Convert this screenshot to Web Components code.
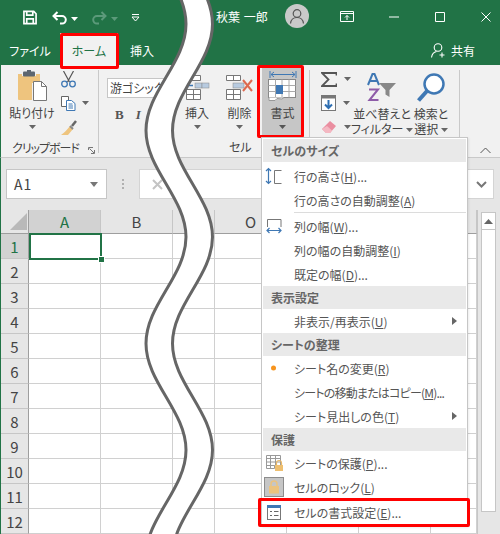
<!DOCTYPE html>
<html lang="ja"><head><meta charset="utf-8"><title>Excel</title>
<style>
html,body{margin:0;padding:0;background:#fff}
body{width:500px;height:534px;overflow:hidden;font-family:"Noto Sans CJK JP","Noto Sans",sans-serif;font-feature-settings:"palt";color:#444}
u{text-decoration:underline;text-underline-offset:1px}
</style></head><body>
<x-app>
  <x-titlebar></x-titlebar>
  <x-tabs></x-tabs>
  <x-ribbon></x-ribbon>
  <x-formula></x-formula>
  <x-sheet></x-sheet>
  <x-wave></x-wave>
  <x-mark style="--x:60px;--y:33px;--w:59px;--h:36px"></x-mark>
  <x-mark style="--x:257px;--y:65px;--w:47px;--h:73px"></x-mark>
  <x-menu>
    <x-mhead>セルのサイズ</x-mhead>
    <x-mitem style="margin-top:2px"><svg slot="icon" width="20" height="20" viewBox="0 0 20 20"><path d="M4.500 2.500v15M2 5l2.500-2.500L7 5M2 15l2.500 2.500L7 15" fill="none" stroke="#3f78b4" stroke-width="1.200"/><path d="M17.500 4.500H10.500V17.500h7" fill="none" stroke="#777" stroke-width="1"/></svg>行の高さ(<u>H</u>)...</x-mitem>
    <x-mitem>行の高さの自動調整(<u>A</u>)</x-mitem>
    <x-msep></x-msep>
    <x-mitem><svg slot="icon" width="20" height="20" viewBox="0 0 20 20"><path d="M3.500 11V3.500h13.500V11" fill="none" stroke="#777" stroke-width="1"/><path d="M3 14.500h14M5.500 12L3 14.500 5.500 17M14.500 12L17 14.500 14.500 17" fill="none" stroke="#3f78b4" stroke-width="1.200"/></svg>列の幅(<u>W</u>)...</x-mitem>
    <x-mitem>列の幅の自動調整(<u>I</u>)</x-mitem>
    <x-mitem>既定の幅(<u>D</u>)...</x-mitem>
    <x-mhead>表示設定</x-mhead>
    <x-mitem arrow>非表示/再表示(<u>U</u>)</x-mitem>
    <x-mhead>シートの整理</x-mhead>
    <x-mitem><svg slot="icon" width="20" height="20" viewBox="0 0 20 20"><circle cx="9.500" cy="10" r="2.500" fill="#f7941d"/></svg>シート名の変更(<u>R</u>)</x-mitem>
    <x-mitem style="letter-spacing:-.8px">シートの移動またはコピー(<u>M</u>)...</x-mitem>
    <x-mitem arrow>シート見出しの色(<u>T</u>)</x-mitem>
    <x-mhead>保護</x-mhead>
    <x-mitem><svg slot="icon" width="20" height="20" viewBox="0 0 20 20"><path d="M2.500 2.500h14v10h-6v3h-8zM2.500 5.500h14M2.500 9h14M2.500 12.500h8M6.500 2.500v13M11.500 2.500v10" fill="none" stroke="#999" stroke-width="1"/><path d="M12.500 12v-2a2.500 2.500 0 0 1 5 0v2" fill="none" stroke="#e8b868" stroke-width="1.200"/><rect x="11" y="12" width="8" height="6" fill="#eebf70"/></svg>シートの保護(<u>P</u>)...</x-mitem>
    <x-mitem><svg slot="icon" width="20" height="20" viewBox="0 0 20 20"><rect x=".5" y=".5" width="19" height="19" fill="#c6c6c6" stroke="#8c8c8c"/><path d="M7 9V7a3 3 0 0 1 6 0v2" fill="none" stroke="#ecc37e" stroke-width="1.500"/><rect x="5" y="9" width="10" height="7.500" fill="#ecc37e"/></svg>セルのロック(<u>L</u>)</x-mitem>
    <x-mitem style="height:26px"><svg slot="icon" width="20" height="20" viewBox="0 0 20 20"><rect x="3.500" y="3.500" width="13" height="14" fill="#fff" stroke="#777"/><rect x="3" y="3" width="14" height="3" fill="#3f78b4"/><path d="M6 9.500h2M10 9.500h4.500M6 13.500h2M10 13.500h4.500" stroke="#666" fill="none"/></svg>セルの書式設定(<u>E</u>)...</x-mitem>
  </x-menu>
  <x-mark style="--x:258px;--y:498px;--w:212px;--h:29px"></x-mark>
</x-app>
<script>
function def(name, css, html, init){
  customElements.define(name, class extends HTMLElement{
    connectedCallback(){
      if(this.shadowRoot) return;
      const r=this.attachShadow({mode:'open'});
      r.innerHTML='<style>'+css+'</style>'+(typeof html==='function'?html(this):html);
      if(init) init(r,this);
    }
  });
}
const caret=(c='#666')=>`<svg width="7" height="4" viewBox="0 0 7 4"><path d="M0 0h7L3.500 4z" fill="${c}"/></svg>`;

def('x-app',':host{display:block;position:relative;width:500px;height:534px;overflow:hidden;font-feature-settings:"palt"}','<slot></slot>');

def('x-titlebar',`:host{display:flex;align-items:center;height:33px;box-sizing:border-box;padding-top:2px;background:#217346;color:#fff;font-size:12px}
.b{display:flex;align-items:center;justify-content:center;flex:none}
svg{display:block}`,`
<div class="b" style="width:14px;margin-left:23px"><svg width="15" height="15" viewBox="0 0 15 15"><path d="M1 1h10.500L14 3.500V14H1zM4 1v4h6.500V1M4 14V9h7v5" fill="none" stroke="#fff" stroke-width="1.800"/></svg></div>
<div class="b" style="width:16px;margin-left:15px"><svg width="16" height="14" viewBox="0 0 16 14"><path d="M5.500 1L1.500 5l4 4M1.500 5H10a3.800 3.800 0 0 1 0 7.600H8" fill="none" stroke="#fff" stroke-width="2"/></svg></div>
<div class="b" style="width:7px;margin-left:3px;padding-top:2px">${caret('#fff')}</div>
<div class="b" style="width:16px;margin-left:13px"><svg width="16" height="14" viewBox="0 0 16 14"><path d="M10.500 1l4 4-4 4M14.500 5H6a3.800 3.800 0 0 0 0 7.600h2" fill="none" stroke="#5c9a7a" stroke-width="2"/></svg></div>
<div class="b" style="width:7px;margin-left:4px;padding-top:2px">${caret('#5c9a7a')}</div>
<div class="b" style="width:9px;margin-left:13px"><svg width="9" height="8" viewBox="0 0 9 8"><path d="M1 .5h7M1 3l3.500 4L8 3z" fill="none" stroke="#fff"/></svg></div>
<div style="margin-left:76px;width:58px;white-space:nowrap;margin-top:-2px;word-spacing:1px">秋葉 一郎</div>
<div class="b" style="width:24px;height:24px;border-radius:50%;background:#c9c9c9;margin:-3px 0 0 11px"><svg width="16" height="16" viewBox="0 0 16 16"><circle cx="8" cy="5.500" r="3.800" fill="none" stroke="#555" stroke-width="1.200"/><path d="M1.500 15.500c.5-4 3-6 6.500-6s6 2 6.500 6" fill="none" stroke="#555" stroke-width="1.200"/></svg></div>
<div class="b" style="width:14px;margin:-2px 0 0 31px"><svg width="14" height="11" viewBox="0 0 14 11"><path d="M.5 .5h13v10H.5zM.5 2.500h13M7 9V4.500M5 6.500l2-2 2 2" fill="none" stroke="#fff"/></svg></div>
<div class="b" style="width:10px;margin:-2px 0 0 35px"><svg width="10" height="2"><rect width="10" height="1" y=".5" fill="#fff"/></svg></div>
<div class="b" style="width:10px;margin:-2px 0 0 36px"><svg width="10" height="10" viewBox="0 0 10 10"><path d="M.5 .5h9v9h-9z" fill="none" stroke="#fff"/></svg></div>
<div class="b" style="width:10px;margin:-2px 0 0 36px"><svg width="10" height="10" viewBox="0 0 10 10"><path d="M.5 .5l9 9M9.500 .5l-9 9" fill="none" stroke="#fff"/></svg></div>`);

def('x-tabs',`:host{display:flex;align-items:center;height:32px;background:#217346;color:#fff;font-size:12px}
.t{display:flex;align-items:center;justify-content:center;height:100%;flex:none;padding-top:2px;box-sizing:border-box}
.h{background:#f1f1f1;color:#217346;height:100%}
.s{margin-left:auto;margin-right:25px;display:flex;align-items:center;gap:6px;padding-top:2px}
svg{display:block}`,`
<div class="t" style="width:60px">ファイル</div>
<div class="t h" style="width:58px">ホーム</div>
<div class="t" style="width:48px">挿入</div>
<div class="s"><svg width="14" height="15" viewBox="0 0 14 15"><circle cx="7" cy="4.500" r="3.800" fill="none" stroke="#fff" stroke-width="1.100"/><path d="M.5 14.500c.5-3.500 2.500-5.500 5-6M8.500 12h5M11 9.500v5" fill="none" stroke="#fff" stroke-width="1.100"/></svg><span>共有</span></div>`);

def('x-rbtn',`:host{display:flex;flex-direction:column;align-items:center;flex:none;height:71px;box-sizing:border-box;font-size:12px;line-height:15px;color:#444;white-space:nowrap;position:relative}
.i{height:35px;display:flex;align-items:flex-end;justify-content:center;margin-bottom:4px}
:host([sel]){background:#c6c6c6}
::slotted(svg){display:block}`,
`<div class="i"><slot name="icon"></slot></div><slot></slot>`);

def('x-ribbon',`:host{display:flex;height:93px;box-sizing:border-box;background:#f1f1f1;border-left:1px solid #217346;border-bottom:1px solid #c9c9c9;font-size:12px;color:#444;position:relative}
.g{display:flex;flex-direction:column;flex:none}
.body{flex:1;display:flex;padding-top:1px}
.lab{height:19px;line-height:17px;text-align:center;font-size:12px;color:#444;white-space:nowrap;position:relative}
.sep{width:1px;height:83px;margin-top:5px;background:#c9c9c9;flex:none}
.col{display:flex;flex-direction:column;flex:none}
.sm{height:24px;display:flex;align-items:center;gap:5px}
svg{display:block}
.cc{display:flex;justify-content:center;margin-top:5px}
.fn{width:59px;height:20px;box-sizing:border-box;margin:12px 0 0 8px;background:#fff;border:1px solid #c6c6c6;padding-left:2px;line-height:18px;font-size:12px;white-space:nowrap;overflow:hidden}
.bi{display:flex;gap:12px;margin:9px 0 0 16px;font:bold 13px "Liberation Serif",serif;color:#555}
.chev{position:absolute;right:9px;bottom:3px}
.launch{position:absolute;right:3px;bottom:3px}
.two{line-height:15px;text-align:center;white-space:nowrap;position:relative;top:-2px}
`,`
<div class="g" style="width:97px">
  <div class="body">
    <x-rbtn style="width:62px"><svg slot="icon" width="30" height="31" viewBox="0 0 30 31"><path d="M1 4h4v2h14V4h4v9h-8v17H2a1 1 0 0 1-1-1z" fill="#eec47e"/><rect x="6" y="1.500" width="12" height="5" rx="1" fill="#5d6670"/><rect x="10" y="0" width="4" height="3" fill="#5d6670"/><path d="M16.500 11.500h8l5 5v14h-13z" fill="#fff" stroke="#777"/><path d="M24.500 11.500v5h5" fill="none" stroke="#777"/></svg>貼り付け<div class="cc">${caret()}</div></x-rbtn>
    <div class="col" style="margin-left:-2px;padding-top:1px">
      <div class="sm"><svg width="15" height="17" viewBox="0 0 15 17"><path d="M2.500 0l6 11M12.500 0l-6 11" stroke="#555" stroke-width="1.200" fill="none"/><circle cx="3.500" cy="13" r="2.800" fill="none" stroke="#3f78b4" stroke-width="1.300"/><circle cx="11.500" cy="13" r="2.800" fill="none" stroke="#3f78b4" stroke-width="1.300"/></svg></div>
      <div class="sm"><svg width="15" height="15" viewBox="0 0 15 15"><path d="M.5 .5h7v10h-7z" fill="#fff" stroke="#666"/><path d="M5.500 4.500h5l3.500 3v7H5.500z" fill="#fff" stroke="#3f78b4"/><path d="M7.500 8h4M7.500 10h4.500M7.500 12h4.500" stroke="#3f78b4"/></svg><span style="margin-left:1px">${caret()}</span></div>
      <div class="sm"><svg width="16" height="15" viewBox="0 0 16 15"><path d="M9 6l3 3-5 6H0c3-2 6-5 9-9z" fill="#eec47e"/><path d="M9 6l3 3" stroke="#888" stroke-width="2"/><path d="M11 6l4-5" stroke="#666" stroke-width="2.500"/></svg></div>
    </div>
  </div>
  <div class="lab" style="text-align:left;padding-left:11px;letter-spacing:-1px">クリップボード<svg class="launch" width="7" height="7" viewBox="0 0 7 7"><path d="M.5 3V.5H5M1.500 1.500L6 6M3 6.500h3.500V3" fill="none" stroke="#777"/></svg></div>
</div>
<div class="sep"></div>
<div class="g" style="width:76px">
  <div class="body" style="flex-direction:column"><div class="fn">游ゴシック</div><div class="bi"><span>B</span><i>I</i></div></div>
  <div class="lab"></div>
</div>
<div class="g" style="width:133px">
  <div class="body" style="padding-left:1px">
    <x-rbtn style="width:42px"><svg slot="icon" width="28" height="26" viewBox="0 0 28 26"><path d="M3.500 .5h14v5h-14zM3.500 14.500h14v10h-14zM10.500 14.500v10M3.500 19.500h14" fill="#fff" stroke="#777"/><rect x="12" y="8" width="7" height="5" fill="#b8cbe0" stroke="#888" stroke-width=".5"/><rect x="19" y="8" width="7" height="5" fill="#b8cbe0" stroke="#888" stroke-width=".5"/><path d="M10 10.500H2M5 8l-3 2.500L5 13" fill="none" stroke="#3f78b4" stroke-width="1.300"/></svg>挿入<div class="cc">${caret()}</div></x-rbtn>
    <x-rbtn style="width:43px"><svg slot="icon" width="28" height="26" viewBox="0 0 28 26"><path d="M.5 .5h14v5H.5zM.5 14.500h14v10H.5zM7.500 14.500v10M.5 19.500h14M7.500 .5v5" fill="#fff" stroke="#777"/><rect x="7" y="8" width="11" height="5" fill="#b8cbe0" stroke="#888" stroke-width=".5"/><path d="M17 5l9 11M26 5l-9 11" stroke="#dd6a50" stroke-width="2"/></svg>削除<div class="cc">${caret()}</div></x-rbtn>
    <x-rbtn sel style="width:41px;margin-left:1px"><svg slot="icon" width="30" height="31" viewBox="0 0 30 31"><path d="M2 1v7M28 1v7M3 4.500h24M6 2L3 4.500 6 7M24 2l3 2.500L24 7" fill="none" stroke="#3f78b4" stroke-width="1"/><rect x=".5" y="9.500" width="27" height="18" fill="#fff" stroke="#888"/><path d="M7.500 9.500v18M14 9.500v18M21 9.500v18M.5 15.500h27M.5 21.500h27" stroke="#aaa" fill="none"/><rect x="8" y="15" width="7" height="9" fill="#3f78b4"/><path d="M1 27.500v3h6l2-2 5 .5 2-1.500" fill="#fff" stroke="#999"/></svg>書式<div class="cc">${caret('#555')}</div></x-rbtn>
  </div>
  <div class="lab" style="text-align:left;padding-left:54px">セル</div>
</div>
<div class="sep" style="margin-left:1px"></div>
<div class="g" style="width:149px">
  <div class="body">
    <div class="col" style="margin-left:11px;width:44px;padding-top:1px">
      <div class="sm" style="gap:7px"><svg width="16" height="15" viewBox="0 0 16 15"><path d="M15.500 3.500V1H1l6.500 6.500L1 14h14.500v-2.500" fill="none" stroke="#555" stroke-width="1.800"/></svg>${caret()}</div>
      <div class="sm" style="gap:7px"><svg width="15" height="16" viewBox="0 0 15 16"><rect x=".5" y=".5" width="14" height="15" fill="#fff" stroke="#777"/><rect x="0" y="0" width="15" height="3.500" fill="#777"/><path d="M7.500 5v8M4 9.500l3.500 3.500L11 9.500" fill="none" stroke="#2f6fb2" stroke-width="2"/></svg>${caret()}</div>
      <div class="sm" style="gap:7px"><svg width="16" height="14" viewBox="0 0 16 14"><path d="M9 1l6 5-6 7H5L1 9z" fill="#ea8ea0"/><path d="M1 9l4 4h4l2-2.500-5-4.500z" fill="#f4b8c2"/></svg>${caret()}</div>
    </div>
    <div class="col" style="width:70px;align-items:center;margin-left:-18px">
      <svg width="30" height="31" viewBox="0 0 30 31" style="margin:7px 0 4px"><path d="M1 12L5.500 1h2L12 12M3 8h7" fill="none" stroke="#3f78b4" stroke-width="2"/><path d="M2 16.500h9L2.500 27h9" fill="none" stroke="#8e5ca8" stroke-width="2"/><path d="M12 10h17l-6.500 7v7l-4-2.500V17z" fill="#888"/></svg>
      <div class="two">並べ替えと<br>フィルター <span style="display:inline-block;vertical-align:2px">${caret()}</span></div>
    </div>
    <div class="col" style="width:44px;align-items:center;margin-left:-8px">
      <svg width="30" height="31" viewBox="0 0 30 31" style="margin:7px 0 4px"><circle cx="18" cy="11" r="9.500" fill="#fff" stroke="#3f78b4" stroke-width="2.500"/><path d="M11 18L2.500 27.500" stroke="#3f78b4" stroke-width="4"/></svg>
      <div class="two">検索と<br>選択 <span style="display:inline-block;vertical-align:2px">${caret()}</span></div>
    </div>
  </div>
  <div class="lab"></div>
</div>
<div class="sep"></div>
<svg class="chev" width="11" height="7" viewBox="0 0 11 7"><path d="M.5 6l5-5 5 5" fill="none" stroke="#555"/></svg>`);

def('x-formula',`:host{display:flex;height:52px;box-sizing:border-box;background:#e6e6e6;border-left:1px solid #217346;padding-top:11px;align-items:flex-start;position:relative}
.nb{width:101px;height:30px;box-sizing:border-box;background:#fff;border:1px solid #c6c6c6;margin-left:5px;display:flex;align-items:center;justify-content:space-between;padding:0 8px 0 7px;font-size:14px;color:#444}
.dots{width:32px;display:flex;flex-direction:column;align-items:center;gap:2px;padding-top:10px;flex:none}
.dots i{width:2px;height:2px;background:#b0b0b0}
.fb{width:355px;height:30px;box-sizing:border-box;background:#fff;border:1px solid #d4d4d4;position:relative;display:flex;align-items:center;padding-left:12px;justify-content:space-between;padding-right:6px}
svg{display:block}`,`
<div class="nb"><span style="letter-spacing:1px">A1</span><svg width="8" height="5" viewBox="0 0 8 5"><path d="M0 0h8L4 5z" fill="#777"/></svg></div>
<div class="dots"><i></i><i></i><i></i></div>
<div class="fb"><svg width="11" height="11" viewBox="0 0 11 11"><path d="M1 1l9 9M10 1l-9 9" stroke="#c4c4c4" stroke-width="2"/></svg><svg width="11" height="7" viewBox="0 0 11 7"><path d="M1 1l4.500 4.500L10 1" fill="none" stroke="#777" stroke-width="2"/></svg></div>`);

const cols=[['A',72],['B',72],['N',42],['O',72],['P',72],['Q',72],['R',46]];
def('x-sheet',`:host{display:flex;height:324px;box-sizing:border-box;border-left:1px solid #217346;background:#fff;position:relative}
.grid{display:grid;grid-template-columns:28px 72px 72px 42px 72px 72px 72px 46px;grid-auto-rows:25px;grid-template-rows:24px;flex:none;width:476px;border-right:1px solid #c6c6c6;box-sizing:content-box}
.c{box-sizing:border-box;border-right:1px solid #d0d0d0;border-bottom:1px solid #d0d0d0}
.h{background:#e6e6e6;display:flex;align-items:center;justify-content:center;font-size:15px;color:#444;box-sizing:border-box;border-bottom:1px solid #9e9e9e;border-right:1px solid #c6c6c6}
.rh{border-bottom:1px solid #c6c6c6;border-right:1px solid #9e9e9e;padding-top:1px}
.on{background:#d2d2d2;color:#217346}
.corner{background:#e6e6e6;border-bottom:1px solid #9e9e9e;border-right:1px solid #9e9e9e;box-sizing:border-box;display:flex;align-items:flex-end;justify-content:flex-end;padding:0 1px 3px 0}
.sel{position:absolute;left:28px;top:23px;width:73px;height:27px;box-sizing:border-box;border:2px solid #217346}
.hd{position:absolute;left:97px;top:46px;background:#217346;border:1px solid #fff;width:5px;height:5px}
.sb{flex:1;background:#e6e6e6;padding:2px 4px 0 3px;box-sizing:border-box}
.tr{height:300px;background:#fff;border:1px solid #c6c6c6;box-sizing:border-box}
.up{height:16px;border-bottom:1px solid #c6c6c6;display:flex;align-items:center;justify-content:center}
svg{display:block}`,()=>{
  let s='<div class="grid"><div class="corner"><svg width="17" height="17" viewBox="0 0 17 17"><path d="M17 0v17H0z" fill="#b9b9b9"/></svg></div>';
  cols.forEach(c=>s+=`<div class="h${c[0]=='A'?' on':''}">${c[0]=='N'?'':c[0]}</div>`);
  for(let r=1;r<=12;r++){
    s+=`<div class="h rh${r==1?' on':''}">${r}</div>`;
    cols.forEach(()=>s+='<div class="c"></div>');
  }
  return s+`</div><div class="sel"></div><div class="hd"></div><div class="sb"><div class="tr"><div class="up"><svg width="9" height="5" viewBox="0 0 9 5"><path d="M0 5h9L4.500 0z" fill="#666"/></svg></div></div></div>`;
});

def('x-wave',':host{position:absolute;left:0;top:0;width:500px;height:534px;pointer-events:none}svg{display:block}',()=>{
  const P=213,hi=186,lo=146,k=P/2*0.3642,W=26.5;
  const pts=[];for(let i=0,y=24-P,x=hi;y<=24+3*P;i++,y+=P/2,x=(x==hi?lo:hi))pts.push([x,y]);
  const down=(dx)=>{let d='';for(let i=1;i<pts.length;i++){const a=pts[i-1],b=pts[i];d+=` C${a[0]+dx} ${a[1]+k} ${b[0]+dx} ${b[1]-k} ${b[0]+dx} ${b[1]}`;}return d;};
  const up=(dx)=>{let d='';for(let i=pts.length-1;i>0;i--){const a=pts[i],b=pts[i-1];d+=` C${a[0]+dx} ${a[1]-k} ${b[0]+dx} ${b[1]+k} ${b[0]+dx} ${b[1]}`;}return d;};
  const s=pts[0],e=pts[pts.length-1];
  const L=`M${s[0]} ${s[1]}`+down(0),R=`M${s[0]+W} ${s[1]}`+down(W);
  const fill=L+` L${e[0]+W} ${e[1]}`+up(W)+' Z';
  return `<svg width="500" height="534"><path d="${fill}" fill="#fff"/><path d="${L}" fill="none" stroke="#666" stroke-width="3"/><path d="${R}" fill="none" stroke="#666" stroke-width="3"/></svg>`;
});

def('x-mark',':host{position:absolute;left:var(--x);top:var(--y);width:var(--w);height:var(--h);box-sizing:border-box;border:3px solid #f00;border-radius:2px;pointer-events:none}','');

def('x-menu',`:host{position:absolute;left:261px;top:137px;width:207px;height:390px;box-sizing:border-box;background:#fff;border:1px solid #c6c6c6;padding:1px;box-shadow:1px 1px 2px rgba(0,0,0,.08);display:flex;flex-direction:column;font-size:12px}`,'<slot></slot>');
def('x-mhead',`:host{display:flex;align-items:center;height:23px;flex:none;background:#e9e9e9;padding-left:8px;font-weight:bold;font-size:12px;color:#666;white-space:nowrap}`,'<slot></slot>');
def('x-mitem',`:host{display:flex;align-items:center;height:24px;flex:none;color:#555;font-size:12px;white-space:nowrap;position:relative}
.i{width:31px;height:100%;display:flex;align-items:center;justify-content:flex-start;flex:none;padding-left:1px;box-sizing:border-box}
.a{position:absolute;right:9px;top:8px;display:none}
:host([arrow]) .a{display:block}`,
`<div class="i"><slot name="icon"></slot></div><slot></slot><svg class="a" width="5" height="8" viewBox="0 0 5 8"><path d="M0 0l5 4-5 4z" fill="#666"/></svg>`);
def('x-msep',`:host{display:block;height:1px;flex:none;background:#dcdcdc;margin:0 0 1px 31px}`,'');
</script>
</body></html>
